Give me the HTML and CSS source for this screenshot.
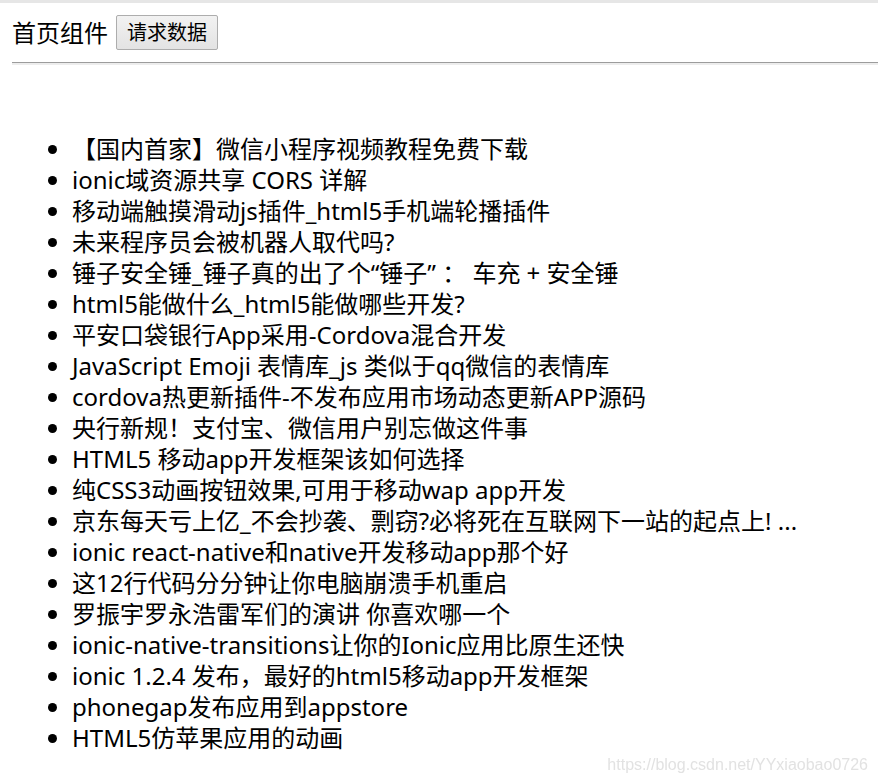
FILE: index.html
```html
<!DOCTYPE html>
<html lang="zh-CN">
<head>
<meta charset="utf-8">
<title>首页组件</title>
<link rel="stylesheet" href="styles.css">
</head>
<body>
<div class="topbar"></div>
<div class="page">
  <div class="header">
    <span class="title">首页组件</span>
    <button class="btn">请求数据</button>
  </div>
  <hr class="rule">
  <ul class="news">
    <li>【国内首家】微信小程序视频教程免费下载</li>
    <li>ionic域资源共享 CORS 详解</li>
    <li>移动端触摸滑动js插件_html5手机端轮播插件</li>
    <li>未来程序员会被机器人取代吗?</li>
    <li>锤子安全锤_锤子真的出了个“锤子” <span class="colon">：</span> 车充 + 安全锤</li>
    <li>html5能做什么_html5能做哪些开发?</li>
    <li>平安口袋银行App采用-Cordova混合开发</li>
    <li>JavaScript Emoji 表情库_js 类似于qq微信的表情库</li>
    <li>cordova热更新插件-不发布应用市场动态更新APP源码</li>
    <li>央行新规！支付宝、微信用户别忘做这件事</li>
    <li>HTML5 移动app开发框架该如何选择</li>
    <li>纯CSS3动画按钮效果,可用于移动wap app开发</li>
    <li>京东每天亏上亿_不会抄袭、剽窃?必将死在互联网下一站的起点上! ...</li>
    <li>ionic react-native和native开发移动app那个好</li>
    <li>这12行代码分分钟让你电脑崩溃手机重启</li>
    <li>罗振宇罗永浩雷军们的演讲 你喜欢哪一个</li>
    <li>ionic-native-transitions让你的Ionic应用比原生还快</li>
    <li>ionic 1.2.4 发布，最好的html5移动app开发框架</li>
    <li>phonegap发布应用到appstore</li>
    <li>HTML5仿苹果应用的动画</li>
  </ul>
</div>
<div class="watermark">https://blog.csdn.net/YYxiaobao0726</div>
</body>
</html>
```
FILE: styles.css
```css
html, body {
  margin: 0;
  padding: 0;
  background: #ffffff;
}
body {
  font-family: "Noto Sans", "Noto Sans CJK SC", sans-serif;
  color: #000;
}
.topbar {
  height: 3px;
  background: #e6e6e6;
}
.page {
  padding-left: 12px;
}
.header {
  display: flex;
  align-items: center;
  gap: 8px;
  margin-top: 12px;
  height: 35px;
}
.title {
  font-size: 24px;
  line-height: 35px;
}
.btn {
  width: 102px;
  height: 35px;
  padding: 0;
  font-family: "Noto Sans", "Noto Sans CJK SC", sans-serif;
  font-size: 20px;
  line-height: 33px;
  color: #000;
  background: linear-gradient(#f2f2f2, #e3e3e3);
  border: 1px solid #adadad;
  border-radius: 2px;
}
.rule {
  margin: 12px 0 0 0;
  height: 0;
  border: 0;
  border-top: 1px solid #9c9c9c;
  border-bottom: 2px solid #ededed;
}
.news {
  margin: 68px 0 0 0;
  padding-left: 60px;
  font-size: 24px;
  line-height: 31px;
}
.colon {
  font-family: "Noto Sans CJK TC", "Noto Sans CJK SC", sans-serif;
  line-height: 0;
}
.watermark {
  position: fixed;
  right: 10px;
  bottom: 7px;
  font-family: "Liberation Sans", sans-serif;
  font-size: 16px;
  color: #e2e2e2;
}
```
